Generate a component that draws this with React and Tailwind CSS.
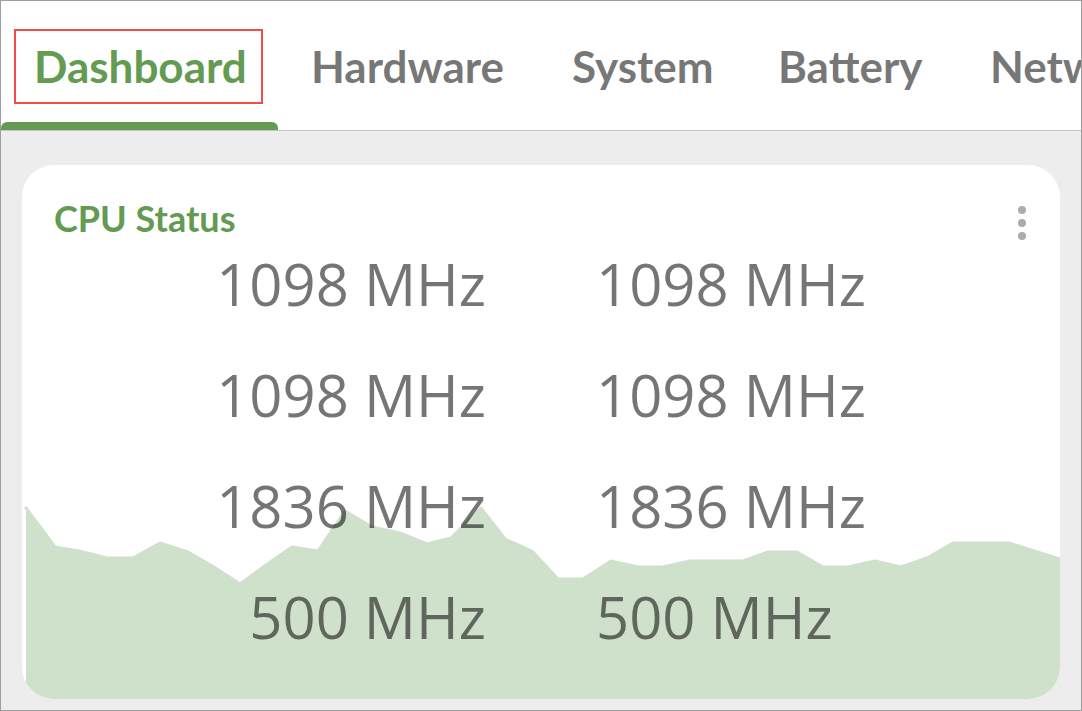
import React from "react";

const tabs = [
  { label: "Dashboard", w: "w-[277px]" },
  { label: "Hardware", w: "w-[261px]" },
  { label: "System", w: "w-[206px]" },
  { label: "Battery", w: "w-[212px]" },
  { label: "Network", w: "w-[260px]" },
];

const rows = [
  ["1098 MHz", "1098 MHz"],
  ["1098 MHz", "1098 MHz"],
  ["1836 MHz", "1836 MHz"],
  ["500 MHz", "500 MHz"],
];

// chart top line, in card coordinates
const points = [
  [4, 343], [33, 382], [57, 386], [85, 393], [111, 393], [138, 378], [166, 387],
  [192, 402], [218, 419], [244, 400], [270, 382], [296, 386], [323, 346], [350, 362],
  [378, 368], [405, 379], [429, 373], [459, 343], [483, 374], [510, 386], [536, 414],
  [561, 414], [589, 396], [616, 402], [641, 402], [668, 396], [721, 396], [746, 387],
  [775, 387], [801, 402], [826, 402], [853, 396], [879, 402], [905, 393], [931, 378],
  [987, 378], [1038, 394],
];

function FreqChart() {
  const line = points.map((p) => p.join(",")).join(" ");
  const area = `${line} 1038,534 4,534`;
  return (
    <svg
      className="absolute inset-0"
      width="1038"
      height="534"
      viewBox="0 0 1038 534"
    >
      <polygon points={area} fill="#cfe0cb" />
      <polyline
        points={line}
        fill="none"
        stroke="#cfe0cb"
        strokeWidth="3"
        strokeLinecap="round"
        strokeLinejoin="round"
      />
    </svg>
  );
}

export default function App() {
  return (
    <div className="w-[1082px] h-[711px] border border-[#9e9e9e] flex flex-col bg-[#ededed] overflow-hidden">
      {/* tab bar */}
      <div className="h-[130px] shrink-0 bg-white border-b border-[#c4c2c8] flex overflow-hidden font-['Lato'] font-bold text-[44px] leading-[1.2]">
        {tabs.map((t, i) => (
          <div
            key={t.label}
            className={`relative shrink-0 ${t.w} pl-[33px] pt-[39px] h-full whitespace-nowrap`}
          >
            <span
              className={
                i === 0 ? "text-[#629b51]" : "text-[rgba(0,0,0,0.54)]"
              }
            >
              {t.label}
            </span>
            {i === 0 && (
              <>
                <div className="absolute left-0 right-0 bottom-0 h-2 rounded-t-[6px] bg-[#629b51]" />
                <div className="absolute left-[13px] top-[28px] w-[249px] h-[75px] border-2 border-[#f14b4b]" />
              </>
            )}
          </div>
        ))}
      </div>

      {/* body */}
      <div className="flex-1 pt-[34px] pl-[21px] pr-[20px]">
        <div className="relative w-[1038px] h-[534px] bg-white rounded-[32px] overflow-hidden">
          <FreqChart />

          <div className="relative pt-[32px]">
            <div className="flex justify-between items-start pl-[32px] pr-[34px]">
              <h2 className="font-['Lato'] font-bold text-[36px] leading-[1.2] text-[#629b51]">
                CPU Status
              </h2>
              <div className="flex flex-col gap-[5px] mt-[9px]">
                <span className="w-2 h-2 rounded-full bg-[#ababab]" />
                <span className="w-2 h-2 rounded-full bg-[#ababab]" />
                <span className="w-2 h-2 rounded-full bg-[#ababab]" />
              </div>
            </div>

            <div className="mt-[4px] grid grid-cols-2 gap-x-[110px] gap-y-[32px] font-['Open_Sans'] text-[58px] leading-[79px] text-[rgba(0,0,0,0.54)]">
              {rows.map(([a, b], i) => (
                <React.Fragment key={i}>
                  <div className="text-right">{a}</div>
                  <div className="text-left">{b}</div>
                </React.Fragment>
              ))}
            </div>
          </div>
        </div>
      </div>
    </div>
  );
}
